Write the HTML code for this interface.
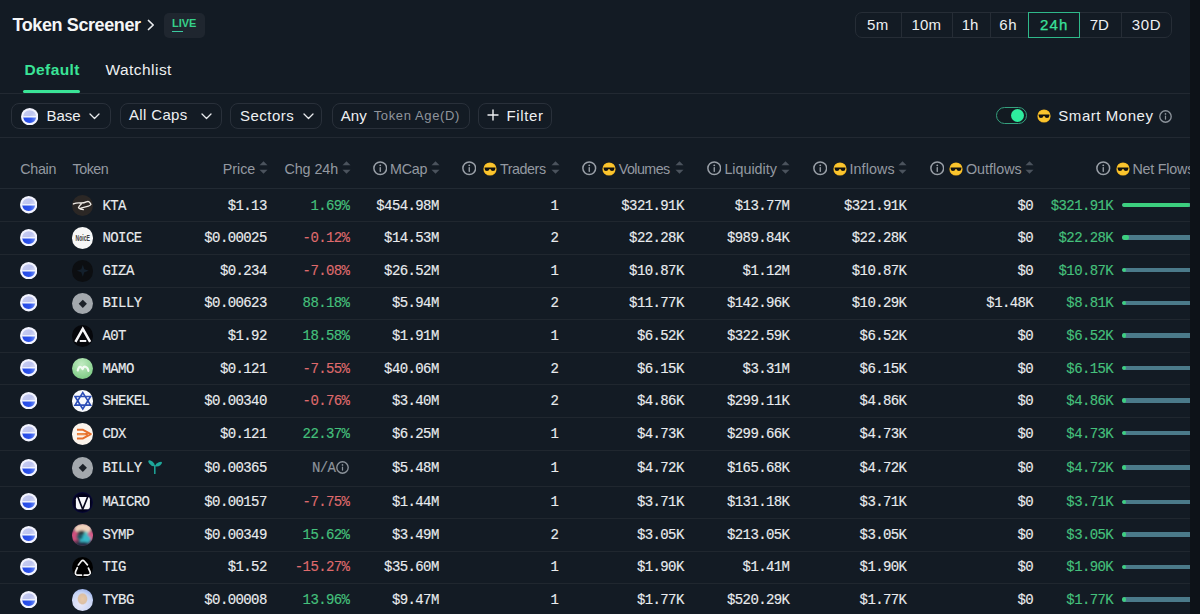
<!DOCTYPE html><html><head><meta charset="utf-8"><style>
*{margin:0;padding:0;box-sizing:border-box}
html,body{width:1200px;height:614px;overflow:hidden;background:#131b24;font-family:"Liberation Sans",sans-serif;color:#eceef0}
.abs{position:absolute;white-space:nowrap}
.title{left:12.5px;top:15px;font-size:18px;font-weight:bold;color:#f5f6f7;letter-spacing:-0.4px}
.live{left:163.5px;top:12.5px;width:41px;height:25px;background:#1f262f;border-radius:5px}
.live span{position:absolute;left:8.5px;top:4.7px;font-size:11px;font-weight:bold;color:#36d18a;letter-spacing:0}
.live i{position:absolute;left:8.5px;top:18.6px;width:11px;height:1.2px;background:#3cc9a0}
.seg{left:855px;top:12px;width:317px;height:26px;border:1px solid #262d36;border-radius:7px}
.segd{position:absolute;top:0;bottom:0;width:1px;background:#262d36}
.segt{font-size:15px;color:#eef0f2;top:16px;letter-spacing:0.4px}
.sel{left:1028px;top:12px;width:52px;height:26px;border:1.3px solid #2fb88a}
.tab{font-size:15.5px;font-weight:bold;top:61px}
.uline{left:23px;top:90px;width:57px;height:3px;background:#3ae497;border-radius:2px}
.hline{left:0;width:1190px;height:1px;background:#222932}
.pill{height:26px;border:1px solid #29303a;border-radius:8px;top:102.5px}
.pt{font-size:15px;color:#eef0f2;top:107px}
.chev{top:113.3px}
.base{position:absolute;width:17.4px;height:17.4px;line-height:0}
.base span{position:absolute;left:2.3px;top:2.3px;width:12.4px;height:12.4px;border-radius:50%;background:linear-gradient(to bottom,#e4e6fa 0,#b9c0ee 42%,#f4f6ff 42%,#f4f6ff 52%,#3b5ff0 52%,#2447e0 100%)}
.hdr{top:160.5px;font-size:14.3px;color:#9399a1}
.info{width:14.5px;height:14.5px;color:#9aa0a8;vertical-align:top}
.emo{width:14px;height:14px;vertical-align:top}
.sort{width:9px;height:13px;vertical-align:top}
.row{position:absolute;left:0;width:1190px;height:33px}
.rl{position:absolute;left:0;width:1190px;height:1px;background:#20272f}
.mono{font-family:"Liberation Mono",monospace;font-size:14px;letter-spacing:-0.6px;color:#e9ebee;-webkit-text-stroke:0.15px currentColor}
.g{color:#45c07c}
.r{color:#df6a6c}
.na{color:#8c939b}
.tk{position:absolute;width:21.6px;height:21.6px;border-radius:50%;overflow:hidden}.tk svg{display:block}
.noice{position:absolute;left:1px;top:5px;font-size:7px;color:#222;font-style:italic;font-family:"Liberation Serif",serif;letter-spacing:-0.3px}
.bar{position:absolute;left:1122px;width:68px;height:4.4px;border-radius:2.2px 0 0 2.2px;background:#4b7a8a;overflow:hidden}
.bar i{position:absolute;left:0;top:0;bottom:0;background:#3ccf7f;border-radius:2.25px}
.rside{left:1190px;top:0;width:10px;height:614px;background:#0d1218}
</style></head><body>
<div class="abs title">Token Screener</div>
<svg class="abs" style="left:146px;top:19px" width="10" height="12" viewBox="0 0 10 12"><path d="M2.5 1.5 L7.2 6 L2.5 10.5" fill="none" stroke="#e9ebee" stroke-width="1.7" stroke-linecap="round" stroke-linejoin="round"/></svg>
<div class="abs live"><span>LIVE</span><i></i></div>
<div class="abs seg">
<div class="segd" style="left:45.0px"></div>
<div class="segd" style="left:96.0px"></div>
<div class="segd" style="left:134.0px"></div>
<div class="segd" style="left:264.8px"></div>
</div>
<div class="abs segt" style="left:867px;color:#eef0f2;letter-spacing:0.5px">5m</div>
<div class="abs segt" style="left:911.5px;color:#eef0f2;letter-spacing:0.2px">10m</div>
<div class="abs segt" style="left:961.7px;color:#eef0f2;letter-spacing:0px">1h</div>
<div class="abs segt" style="left:999.2px;color:#eef0f2;letter-spacing:0.6px">6h</div>
<div class="abs segt" style="left:1040px;color:#3ae29b;-webkit-text-stroke:0.25px #3ae29b;letter-spacing:1.1px">24h</div>
<div class="abs segt" style="left:1089.7px;color:#eef0f2;letter-spacing:0px">7D</div>
<div class="abs segt" style="left:1131.7px;color:#eef0f2;letter-spacing:0.7px">30D</div>
<div class="abs sel"></div>
<div class="abs tab" style="left:24.5px;color:#3ae497;letter-spacing:0.4px">Default</div>
<div class="abs tab" style="left:105.5px;color:#eef0f2;font-weight:normal;letter-spacing:0.45px">Watchlist</div>
<div class="abs uline"></div>
<div class="abs hline" style="top:93px"></div>
<div class="abs pill" style="left:11px;width:100px"></div>
<div class="abs pill" style="left:120.2px;width:101.7px"></div>
<div class="abs pill" style="left:230px;width:92px"></div>
<div class="abs pill" style="left:331.5px;width:138.5px"></div>
<div class="abs pill" style="left:478px;width:74px"></div>
<svg width="0" height="0" style="position:absolute"><defs><linearGradient id="bgt" x1="0" y1="0" x2="1" y2="1"><stop offset="0" stop-color="#c9cef2"/><stop offset="0.45" stop-color="#bcc3ee"/><stop offset="1" stop-color="#f4f5ff"/></linearGradient><linearGradient id="bgb" x1="0" y1="0" x2="1" y2="0"><stop offset="0" stop-color="#2246e2"/><stop offset="0.6" stop-color="#2f55ec"/><stop offset="1" stop-color="#6c8cf4"/></linearGradient></defs></svg>
<span class="base" style="left:20.5px;top:107.5px"><svg width="17.4" height="17.4" viewBox="0 0 17 17" style="display:block"><circle cx="8.5" cy="8.5" r="8.5" fill="#f3f4ff"/><circle cx="8.5" cy="8.5" r="6.4" fill="url(#bgt)"/><path d="M2.12 8 H14.88 A6.4 6.4 0 0 1 2.12 8Z" fill="#fbfcff"/><path d="M2.2 9.3 H14.8 A6.4 6.4 0 0 1 2.2 9.3Z" fill="url(#bgb)"/></svg></span>
<div class="abs pt" style="left:46.5px">Base</div>
<svg class="abs chev" style="left:88.5px" width="11" height="7" viewBox="0 0 11 7"><path d="M1 1 L5.5 5.5 L10 1" fill="none" stroke="#e9ebee" stroke-width="1.3" stroke-linecap="round" stroke-linejoin="round"/></svg>
<div class="abs pt" style="left:129px;top:105.5px;letter-spacing:0.35px">All Caps</div>
<svg class="abs chev" style="left:200.5px" width="11" height="7" viewBox="0 0 11 7"><path d="M1 1 L5.5 5.5 L10 1" fill="none" stroke="#e9ebee" stroke-width="1.3" stroke-linecap="round" stroke-linejoin="round"/></svg>
<div class="abs pt" style="left:240px;letter-spacing:0.5px">Sectors</div>
<svg class="abs chev" style="left:302.5px" width="11" height="7" viewBox="0 0 11 7"><path d="M1 1 L5.5 5.5 L10 1" fill="none" stroke="#e9ebee" stroke-width="1.3" stroke-linecap="round" stroke-linejoin="round"/></svg>
<div class="abs pt" style="left:340.8px">Any</div>
<div class="abs pt" style="left:373.7px;top:107.5px;font-size:13px;color:#8f959d;letter-spacing:0.62px">Token Age(D)</div>
<svg class="abs" style="left:487px;top:109px" width="12" height="12" viewBox="0 0 12 12"><path d="M6 1 V11 M1 6 H11" stroke="#eef0f2" stroke-width="1.4" stroke-linecap="round"/></svg>
<div class="abs pt" style="left:506.5px;letter-spacing:0.65px">Filter</div>
<div class="abs" style="left:996px;top:107px;width:31px;height:17px;border:1.5px solid #35a07e;border-radius:999px;background:#121a21"></div>
<div class="abs" style="left:1011px;top:109px;width:13px;height:13px;border-radius:50%;background:#2eec9e"></div>
<svg class="abs emo" style="left:1037.3px;top:109.3px;width:14px;height:14px" viewBox="0 0 14 14"><circle cx="7" cy="7" r="6.6" fill="#f2b51f"/><circle cx="7" cy="7" r="6" fill="#fbc52e"/><path d="M1.6 5.4 H12.4 V6.4 Q12.2 9 10 9 Q8 9 7.4 7 H6.6 Q6 9 4 9 Q1.8 9 1.6 6.4Z" fill="#111"/></svg>
<div class="abs pt" style="left:1058.3px;letter-spacing:0.55px">Smart Money</div>
<svg class="abs info" style="left:1159px;top:109.5px;width:13px;height:13px;color:#8c939b" viewBox="0 0 14 14"><circle cx="7" cy="7" r="6.15" fill="none" stroke="currentColor" stroke-width="1.45"/><circle cx="7" cy="4.2" r="0.9" fill="currentColor"/><rect x="6.35" y="5.9" width="1.3" height="4.6" rx="0.5" fill="currentColor"/></svg>
<div class="abs hline" style="top:137px"></div>
<div class="abs hdr" style="left:20.3px;letter-spacing:-0.33px">Chain</div>
<div class="abs hdr" style="left:72.6px;letter-spacing:-0.5px">Token</div>
<div class="abs hdr" style="left:222.70px;letter-spacing:0px">Price</div>
<div class="abs" style="left:259.00px;top:161px;line-height:0"><svg class="sort" viewBox="0 0 9 13"><path d="M0.5 4.2 L4.5 0.3 L8.5 4.2Z" fill="#4b535d"/><path d="M0.5 8.8 L4.5 12.7 L8.5 8.8Z" fill="#4b535d"/></svg></div>
<div class="abs hdr" style="left:284.40px;letter-spacing:-0.05px">Chg 24h</div>
<div class="abs" style="left:342.00px;top:161px;line-height:0"><svg class="sort" viewBox="0 0 9 13"><path d="M0.5 4.2 L4.5 0.3 L8.5 4.2Z" fill="#4b535d"/><path d="M0.5 8.8 L4.5 12.7 L8.5 8.8Z" fill="#4b535d"/></svg></div>
<div class="abs hdr" style="left:390.10px;letter-spacing:-0.3px">MCap</div>
<div class="abs" style="left:372.50px;top:161.3px;line-height:0"><svg class="info" viewBox="0 0 14 14"><circle cx="7" cy="7" r="6.15" fill="none" stroke="currentColor" stroke-width="1.45"/><circle cx="7" cy="4.2" r="0.9" fill="currentColor"/><rect x="6.35" y="5.9" width="1.3" height="4.6" rx="0.5" fill="currentColor"/></svg></div>
<div class="abs" style="left:431.40px;top:161px;line-height:0"><svg class="sort" viewBox="0 0 9 13"><path d="M0.5 4.2 L4.5 0.3 L8.5 4.2Z" fill="#4b535d"/><path d="M0.5 8.8 L4.5 12.7 L8.5 8.8Z" fill="#4b535d"/></svg></div>
<div class="abs hdr" style="left:500.00px;letter-spacing:-0.45px">Traders</div>
<div class="abs" style="left:461.70px;top:161.3px;line-height:0"><svg class="info" viewBox="0 0 14 14"><circle cx="7" cy="7" r="6.15" fill="none" stroke="currentColor" stroke-width="1.45"/><circle cx="7" cy="4.2" r="0.9" fill="currentColor"/><rect x="6.35" y="5.9" width="1.3" height="4.6" rx="0.5" fill="currentColor"/></svg></div>
<div class="abs" style="left:482.60px;top:161.5px;line-height:0"><svg class="emo" viewBox="0 0 14 14"><circle cx="7" cy="7" r="6.6" fill="#f2b51f"/><circle cx="7" cy="7" r="6" fill="#fbc52e"/><path d="M1.6 5.4 H12.4 V6.4 Q12.2 9 10 9 Q8 9 7.4 7 H6.6 Q6 9 4 9 Q1.8 9 1.6 6.4Z" fill="#111"/></svg></div>
<div class="abs" style="left:550.70px;top:161px;line-height:0"><svg class="sort" viewBox="0 0 9 13"><path d="M0.5 4.2 L4.5 0.3 L8.5 4.2Z" fill="#4b535d"/><path d="M0.5 8.8 L4.5 12.7 L8.5 8.8Z" fill="#4b535d"/></svg></div>
<div class="abs hdr" style="left:618.70px;letter-spacing:-0.55px">Volumes</div>
<div class="abs" style="left:582.10px;top:161.3px;line-height:0"><svg class="info" viewBox="0 0 14 14"><circle cx="7" cy="7" r="6.15" fill="none" stroke="currentColor" stroke-width="1.45"/><circle cx="7" cy="4.2" r="0.9" fill="currentColor"/><rect x="6.35" y="5.9" width="1.3" height="4.6" rx="0.5" fill="currentColor"/></svg></div>
<div class="abs" style="left:602.10px;top:161.5px;line-height:0"><svg class="emo" viewBox="0 0 14 14"><circle cx="7" cy="7" r="6.6" fill="#f2b51f"/><circle cx="7" cy="7" r="6" fill="#fbc52e"/><path d="M1.6 5.4 H12.4 V6.4 Q12.2 9 10 9 Q8 9 7.4 7 H6.6 Q6 9 4 9 Q1.8 9 1.6 6.4Z" fill="#111"/></svg></div>
<div class="abs" style="left:675.40px;top:161px;line-height:0"><svg class="sort" viewBox="0 0 9 13"><path d="M0.5 4.2 L4.5 0.3 L8.5 4.2Z" fill="#4b535d"/><path d="M0.5 8.8 L4.5 12.7 L8.5 8.8Z" fill="#4b535d"/></svg></div>
<div class="abs hdr" style="left:724.40px;letter-spacing:0px">Liquidity</div>
<div class="abs" style="left:706.80px;top:161.3px;line-height:0"><svg class="info" viewBox="0 0 14 14"><circle cx="7" cy="7" r="6.15" fill="none" stroke="currentColor" stroke-width="1.45"/><circle cx="7" cy="4.2" r="0.9" fill="currentColor"/><rect x="6.35" y="5.9" width="1.3" height="4.6" rx="0.5" fill="currentColor"/></svg></div>
<div class="abs" style="left:781.45px;top:161px;line-height:0"><svg class="sort" viewBox="0 0 9 13"><path d="M0.5 4.2 L4.5 0.3 L8.5 4.2Z" fill="#4b535d"/><path d="M0.5 8.8 L4.5 12.7 L8.5 8.8Z" fill="#4b535d"/></svg></div>
<div class="abs hdr" style="left:849.40px;letter-spacing:0.12px">Inflows</div>
<div class="abs" style="left:812.80px;top:161.3px;line-height:0"><svg class="info" viewBox="0 0 14 14"><circle cx="7" cy="7" r="6.15" fill="none" stroke="currentColor" stroke-width="1.45"/><circle cx="7" cy="4.2" r="0.9" fill="currentColor"/><rect x="6.35" y="5.9" width="1.3" height="4.6" rx="0.5" fill="currentColor"/></svg></div>
<div class="abs" style="left:833.05px;top:161.5px;line-height:0"><svg class="emo" viewBox="0 0 14 14"><circle cx="7" cy="7" r="6.6" fill="#f2b51f"/><circle cx="7" cy="7" r="6" fill="#fbc52e"/><path d="M1.6 5.4 H12.4 V6.4 Q12.2 9 10 9 Q8 9 7.4 7 H6.6 Q6 9 4 9 Q1.8 9 1.6 6.4Z" fill="#111"/></svg></div>
<div class="abs" style="left:898.45px;top:161px;line-height:0"><svg class="sort" viewBox="0 0 9 13"><path d="M0.5 4.2 L4.5 0.3 L8.5 4.2Z" fill="#4b535d"/><path d="M0.5 8.8 L4.5 12.7 L8.5 8.8Z" fill="#4b535d"/></svg></div>
<div class="abs hdr" style="left:965.90px;letter-spacing:0.03px">Outflows</div>
<div class="abs" style="left:929.80px;top:161.3px;line-height:0"><svg class="info" viewBox="0 0 14 14"><circle cx="7" cy="7" r="6.15" fill="none" stroke="currentColor" stroke-width="1.45"/><circle cx="7" cy="4.2" r="0.9" fill="currentColor"/><rect x="6.35" y="5.9" width="1.3" height="4.6" rx="0.5" fill="currentColor"/></svg></div>
<div class="abs" style="left:949.30px;top:161.5px;line-height:0"><svg class="emo" viewBox="0 0 14 14"><circle cx="7" cy="7" r="6.6" fill="#f2b51f"/><circle cx="7" cy="7" r="6" fill="#fbc52e"/><path d="M1.6 5.4 H12.4 V6.4 Q12.2 9 10 9 Q8 9 7.4 7 H6.6 Q6 9 4 9 Q1.8 9 1.6 6.4Z" fill="#111"/></svg></div>
<div class="abs" style="left:1025.20px;top:161px;line-height:0"><svg class="sort" viewBox="0 0 9 13"><path d="M0.5 4.2 L4.5 0.3 L8.5 4.2Z" fill="#4b535d"/><path d="M0.5 8.8 L4.5 12.7 L8.5 8.8Z" fill="#4b535d"/></svg></div>
<div class="abs hdr" style="left:1132.40px;letter-spacing:-0.2px">Net Flows</div>
<div class="abs" style="left:1096.05px;top:161.3px;line-height:0"><svg class="info" viewBox="0 0 14 14"><circle cx="7" cy="7" r="6.15" fill="none" stroke="currentColor" stroke-width="1.45"/><circle cx="7" cy="4.2" r="0.9" fill="currentColor"/><rect x="6.35" y="5.9" width="1.3" height="4.6" rx="0.5" fill="currentColor"/></svg></div>
<div class="abs" style="left:1116.05px;top:161.5px;line-height:0"><svg class="emo" viewBox="0 0 14 14"><circle cx="7" cy="7" r="6.6" fill="#f2b51f"/><circle cx="7" cy="7" r="6" fill="#fbc52e"/><path d="M1.6 5.4 H12.4 V6.4 Q12.2 9 10 9 Q8 9 7.4 7 H6.6 Q6 9 4 9 Q1.8 9 1.6 6.4Z" fill="#111"/></svg></div>
<div class="abs hline" style="top:188.4px;background:#222a33"></div>
<span class="base" style="left:19.8px;top:196.39px"><svg width="17.4" height="17.4" viewBox="0 0 17 17" style="display:block"><circle cx="8.5" cy="8.5" r="8.5" fill="#f3f4ff"/><circle cx="8.5" cy="8.5" r="6.4" fill="url(#bgt)"/><path d="M2.12 8 H14.88 A6.4 6.4 0 0 1 2.12 8Z" fill="#fbfcff"/><path d="M2.2 9.3 H14.8 A6.4 6.4 0 0 1 2.2 9.3Z" fill="url(#bgb)"/></svg></span>
<span class="tk" style="left:71.9px;top:194.89px;background:#2b2725"><svg viewBox="0 0 20 20" width="21.6" height="21.6"><path d="M1.2 8.3 Q4 7.2 7.5 7.4 Q11 7.6 13.2 6.4 Q15 5.6 16.2 6.6 L17.6 8.6 Q17 9.8 15.2 10.3 Q12.5 11 10 11.6 L8.2 12.2 M8.6 8.4 Q6.5 10 6 11.8 Q7.5 13.4 10.5 13.6" fill="none" stroke="#efebe6" stroke-width="1.2" stroke-linecap="round" stroke-linejoin="round"/></svg></span>
<div class="abs mono" style="left:102.5px;top:197.69px">KTA</div>
<div class="abs mono" style="right:933.30px;top:197.69px">$1.13</div>
<div class="abs mono g" style="right:850.60px;top:197.69px">1.69%</div>
<div class="abs mono" style="right:761.30px;top:197.69px">$454.98M</div>
<div class="abs mono" style="right:641.60px;top:197.69px">1</div>
<div class="abs mono" style="right:516.30px;top:197.69px">$321.91K</div>
<div class="abs mono" style="right:410.60px;top:197.69px">$13.77M</div>
<div class="abs mono" style="right:293.60px;top:197.69px">$321.91K</div>
<div class="abs mono" style="right:166.85px;top:197.69px">$0</div>
<div class="abs mono g" style="right:86.85px;top:197.69px">$321.91K</div>
<div class="bar" style="top:202.89px"><i style="width:68.0px"></i></div>
<div class="rl" style="top:221.48px"></div>
<span class="base" style="left:19.8px;top:228.97px"><svg width="17.4" height="17.4" viewBox="0 0 17 17" style="display:block"><circle cx="8.5" cy="8.5" r="8.5" fill="#f3f4ff"/><circle cx="8.5" cy="8.5" r="6.4" fill="url(#bgt)"/><path d="M2.12 8 H14.88 A6.4 6.4 0 0 1 2.12 8Z" fill="#fbfcff"/><path d="M2.2 9.3 H14.8 A6.4 6.4 0 0 1 2.2 9.3Z" fill="url(#bgb)"/></svg></span>
<span class="tk" style="left:71.9px;top:227.47px;background:#f7f7f7"><svg viewBox="0 0 20 20" width="21.6" height="21.6"><text x="3.3" y="13" font-family="Liberation Sans" font-weight="bold" font-size="8.4" fill="#404040" textLength="13.4" lengthAdjust="spacingAndGlyphs">NoicE</text></svg></span>
<div class="abs mono" style="left:102.5px;top:230.27px">NOICE</div>
<div class="abs mono" style="right:933.30px;top:230.27px">$0.00025</div>
<div class="abs mono r" style="right:850.60px;top:230.27px">-0.12%</div>
<div class="abs mono" style="right:761.30px;top:230.27px">$14.53M</div>
<div class="abs mono" style="right:641.60px;top:230.27px">2</div>
<div class="abs mono" style="right:516.30px;top:230.27px">$22.28K</div>
<div class="abs mono" style="right:410.60px;top:230.27px">$989.84K</div>
<div class="abs mono" style="right:293.60px;top:230.27px">$22.28K</div>
<div class="abs mono" style="right:166.85px;top:230.27px">$0</div>
<div class="abs mono g" style="right:86.85px;top:230.27px">$22.28K</div>
<div class="bar" style="top:235.47px"><i style="width:6.5px"></i></div>
<div class="rl" style="top:254.06px"></div>
<span class="base" style="left:19.8px;top:261.55px"><svg width="17.4" height="17.4" viewBox="0 0 17 17" style="display:block"><circle cx="8.5" cy="8.5" r="8.5" fill="#f3f4ff"/><circle cx="8.5" cy="8.5" r="6.4" fill="url(#bgt)"/><path d="M2.12 8 H14.88 A6.4 6.4 0 0 1 2.12 8Z" fill="#fbfcff"/><path d="M2.2 9.3 H14.8 A6.4 6.4 0 0 1 2.2 9.3Z" fill="url(#bgb)"/></svg></span>
<span class="tk" style="left:71.9px;top:260.05px;background:#0c0e11"><svg viewBox="0 0 20 20" width="21.6" height="21.6"><path d="M10 4.5 L11.4 8.6 L15.5 10 L11.4 11.4 L10 15.5 L8.6 11.4 L4.5 10 L8.6 8.6Z" fill="#14202c"/></svg></span>
<div class="abs mono" style="left:102.5px;top:262.85px">GIZA</div>
<div class="abs mono" style="right:933.30px;top:262.85px">$0.234</div>
<div class="abs mono r" style="right:850.60px;top:262.85px">-7.08%</div>
<div class="abs mono" style="right:761.30px;top:262.85px">$26.52M</div>
<div class="abs mono" style="right:641.60px;top:262.85px">1</div>
<div class="abs mono" style="right:516.30px;top:262.85px">$10.87K</div>
<div class="abs mono" style="right:410.60px;top:262.85px">$1.12M</div>
<div class="abs mono" style="right:293.60px;top:262.85px">$10.87K</div>
<div class="abs mono" style="right:166.85px;top:262.85px">$0</div>
<div class="abs mono g" style="right:86.85px;top:262.85px">$10.87K</div>
<div class="bar" style="top:268.05px"><i style="width:4.2px"></i></div>
<div class="rl" style="top:286.64px"></div>
<span class="base" style="left:19.8px;top:294.13px"><svg width="17.4" height="17.4" viewBox="0 0 17 17" style="display:block"><circle cx="8.5" cy="8.5" r="8.5" fill="#f3f4ff"/><circle cx="8.5" cy="8.5" r="6.4" fill="url(#bgt)"/><path d="M2.12 8 H14.88 A6.4 6.4 0 0 1 2.12 8Z" fill="#fbfcff"/><path d="M2.2 9.3 H14.8 A6.4 6.4 0 0 1 2.2 9.3Z" fill="url(#bgb)"/></svg></span>
<span class="tk" style="left:71.9px;top:292.63px;background:#a3a8ad"><svg viewBox="0 0 20 20" width="21.6" height="21.6"><path d="M10 6.2 L13.8 10 L10 13.8 L6.2 10Z" fill="#1c2128"/></svg></span>
<div class="abs mono" style="left:102.5px;top:295.43px">BILLY</div>
<div class="abs mono" style="right:933.30px;top:295.43px">$0.00623</div>
<div class="abs mono g" style="right:850.60px;top:295.43px">88.18%</div>
<div class="abs mono" style="right:761.30px;top:295.43px">$5.94M</div>
<div class="abs mono" style="right:641.60px;top:295.43px">2</div>
<div class="abs mono" style="right:516.30px;top:295.43px">$11.77K</div>
<div class="abs mono" style="right:410.60px;top:295.43px">$142.96K</div>
<div class="abs mono" style="right:293.60px;top:295.43px">$10.29K</div>
<div class="abs mono" style="right:166.85px;top:295.43px">$1.48K</div>
<div class="abs mono g" style="right:86.85px;top:295.43px">$8.81K</div>
<div class="bar" style="top:300.63px"><i style="width:4.2px"></i></div>
<div class="rl" style="top:319.22px"></div>
<span class="base" style="left:19.8px;top:326.71px"><svg width="17.4" height="17.4" viewBox="0 0 17 17" style="display:block"><circle cx="8.5" cy="8.5" r="8.5" fill="#f3f4ff"/><circle cx="8.5" cy="8.5" r="6.4" fill="url(#bgt)"/><path d="M2.12 8 H14.88 A6.4 6.4 0 0 1 2.12 8Z" fill="#fbfcff"/><path d="M2.2 9.3 H14.8 A6.4 6.4 0 0 1 2.2 9.3Z" fill="url(#bgb)"/></svg></span>
<span class="tk" style="left:71.9px;top:325.21px;background:#06070b"><svg viewBox="0 0 20 20" width="21.6" height="21.6"><path d="M3.2 15.6 L10 3.6 L16.8 15.6" fill="none" stroke="#f6f6f8" stroke-width="2.3" stroke-linejoin="miter"/><rect x="7.2" y="13.9" width="6" height="1.8" fill="#f6f6f8"/></svg></span>
<div class="abs mono" style="left:102.5px;top:328.01px">A0T</div>
<div class="abs mono" style="right:933.30px;top:328.01px">$1.92</div>
<div class="abs mono g" style="right:850.60px;top:328.01px">18.58%</div>
<div class="abs mono" style="right:761.30px;top:328.01px">$1.91M</div>
<div class="abs mono" style="right:641.60px;top:328.01px">1</div>
<div class="abs mono" style="right:516.30px;top:328.01px">$6.52K</div>
<div class="abs mono" style="right:410.60px;top:328.01px">$322.59K</div>
<div class="abs mono" style="right:293.60px;top:328.01px">$6.52K</div>
<div class="abs mono" style="right:166.85px;top:328.01px">$0</div>
<div class="abs mono g" style="right:86.85px;top:328.01px">$6.52K</div>
<div class="bar" style="top:333.21px"><i style="width:4.2px"></i></div>
<div class="rl" style="top:351.80px"></div>
<span class="base" style="left:19.8px;top:359.29px"><svg width="17.4" height="17.4" viewBox="0 0 17 17" style="display:block"><circle cx="8.5" cy="8.5" r="8.5" fill="#f3f4ff"/><circle cx="8.5" cy="8.5" r="6.4" fill="url(#bgt)"/><path d="M2.12 8 H14.88 A6.4 6.4 0 0 1 2.12 8Z" fill="#fbfcff"/><path d="M2.2 9.3 H14.8 A6.4 6.4 0 0 1 2.2 9.3Z" fill="url(#bgb)"/></svg></span>
<span class="tk" style="left:71.9px;top:357.79px;background:radial-gradient(circle at 45% 30%,#c2ebc2,#86d08c 70%,#6fc27a)"><svg viewBox="0 0 20 20" width="21.6" height="21.6"><path d="M5.3 11.6 Q6.2 7.6 8 8.3 Q9.3 8.9 9.8 10.4 Q10.6 7.6 12.4 8.1 Q14.8 8.8 15.2 12" fill="none" stroke="#f2fbf2" stroke-width="2" stroke-linecap="round" stroke-linejoin="round"/></svg></span>
<div class="abs mono" style="left:102.5px;top:360.59px">MAMO</div>
<div class="abs mono" style="right:933.30px;top:360.59px">$0.121</div>
<div class="abs mono r" style="right:850.60px;top:360.59px">-7.55%</div>
<div class="abs mono" style="right:761.30px;top:360.59px">$40.06M</div>
<div class="abs mono" style="right:641.60px;top:360.59px">2</div>
<div class="abs mono" style="right:516.30px;top:360.59px">$6.15K</div>
<div class="abs mono" style="right:410.60px;top:360.59px">$3.31M</div>
<div class="abs mono" style="right:293.60px;top:360.59px">$6.15K</div>
<div class="abs mono" style="right:166.85px;top:360.59px">$0</div>
<div class="abs mono g" style="right:86.85px;top:360.59px">$6.15K</div>
<div class="bar" style="top:365.79px"><i style="width:4.2px"></i></div>
<div class="rl" style="top:384.38px"></div>
<span class="base" style="left:19.8px;top:391.87px"><svg width="17.4" height="17.4" viewBox="0 0 17 17" style="display:block"><circle cx="8.5" cy="8.5" r="8.5" fill="#f3f4ff"/><circle cx="8.5" cy="8.5" r="6.4" fill="url(#bgt)"/><path d="M2.12 8 H14.88 A6.4 6.4 0 0 1 2.12 8Z" fill="#fbfcff"/><path d="M2.2 9.3 H14.8 A6.4 6.4 0 0 1 2.2 9.3Z" fill="url(#bgb)"/></svg></span>
<span class="tk" style="left:71.9px;top:390.37px;background:#f8f9fc"><svg viewBox="0 0 20 20" width="21.6" height="21.6"><path d="M10 2.4 L17.2 14 L2.8 14Z M10 17.6 L2.8 6 L17.2 6Z" fill="none" stroke="#2c4db6" stroke-width="1.5" stroke-linejoin="miter"/></svg></span>
<div class="abs mono" style="left:102.5px;top:393.17px">SHEKEL</div>
<div class="abs mono" style="right:933.30px;top:393.17px">$0.00340</div>
<div class="abs mono r" style="right:850.60px;top:393.17px">-0.76%</div>
<div class="abs mono" style="right:761.30px;top:393.17px">$3.40M</div>
<div class="abs mono" style="right:641.60px;top:393.17px">2</div>
<div class="abs mono" style="right:516.30px;top:393.17px">$4.86K</div>
<div class="abs mono" style="right:410.60px;top:393.17px">$299.11K</div>
<div class="abs mono" style="right:293.60px;top:393.17px">$4.86K</div>
<div class="abs mono" style="right:166.85px;top:393.17px">$0</div>
<div class="abs mono g" style="right:86.85px;top:393.17px">$4.86K</div>
<div class="bar" style="top:398.37px"><i style="width:4.2px"></i></div>
<div class="rl" style="top:416.96px"></div>
<span class="base" style="left:19.8px;top:424.45px"><svg width="17.4" height="17.4" viewBox="0 0 17 17" style="display:block"><circle cx="8.5" cy="8.5" r="8.5" fill="#f3f4ff"/><circle cx="8.5" cy="8.5" r="6.4" fill="url(#bgt)"/><path d="M2.12 8 H14.88 A6.4 6.4 0 0 1 2.12 8Z" fill="#fbfcff"/><path d="M2.2 9.3 H14.8 A6.4 6.4 0 0 1 2.2 9.3Z" fill="url(#bgb)"/></svg></span>
<span class="tk" style="left:71.9px;top:422.95px;background:#fcf4ec"><svg viewBox="0 0 20 20" width="21.6" height="21.6"><path d="M4.6 6.2 H9.8 L17.4 10.3 L9.8 14.4 H4.6 M4.6 10.3 H14.6" fill="none" stroke="#e66f2c" stroke-width="1.9" stroke-linejoin="round"/><path d="M5 10.3 H12.5" stroke="#f6b070" stroke-width="0.8"/></svg></span>
<div class="abs mono" style="left:102.5px;top:425.75px">CDX</div>
<div class="abs mono" style="right:933.30px;top:425.75px">$0.121</div>
<div class="abs mono g" style="right:850.60px;top:425.75px">22.37%</div>
<div class="abs mono" style="right:761.30px;top:425.75px">$6.25M</div>
<div class="abs mono" style="right:641.60px;top:425.75px">1</div>
<div class="abs mono" style="right:516.30px;top:425.75px">$4.73K</div>
<div class="abs mono" style="right:410.60px;top:425.75px">$299.66K</div>
<div class="abs mono" style="right:293.60px;top:425.75px">$4.73K</div>
<div class="abs mono" style="right:166.85px;top:425.75px">$0</div>
<div class="abs mono g" style="right:86.85px;top:425.75px">$4.73K</div>
<div class="bar" style="top:430.95px"><i style="width:4.2px"></i></div>
<div class="rl" style="top:449.54px"></div>
<span class="base" style="left:19.8px;top:458.74px"><svg width="17.4" height="17.4" viewBox="0 0 17 17" style="display:block"><circle cx="8.5" cy="8.5" r="8.5" fill="#f3f4ff"/><circle cx="8.5" cy="8.5" r="6.4" fill="url(#bgt)"/><path d="M2.12 8 H14.88 A6.4 6.4 0 0 1 2.12 8Z" fill="#fbfcff"/><path d="M2.2 9.3 H14.8 A6.4 6.4 0 0 1 2.2 9.3Z" fill="url(#bgb)"/></svg></span>
<span class="tk" style="left:71.9px;top:457.24px;background:#a3a8ad"><svg viewBox="0 0 20 20" width="21.6" height="21.6"><path d="M10 6.2 L13.8 10 L10 13.8 L6.2 10Z" fill="#1c2128"/></svg></span>
<div class="abs mono" style="left:102.5px;top:460.04px">BILLY</div>
<div class="abs" style="left:147.1px;top:456.44px"><svg class="sprout" viewBox="0 0 16 18" width="16" height="18" style="display:block"><path d="M7.8 17.6 V9.5" stroke="#1ea79a" stroke-width="1.5" stroke-linecap="round"/><path d="M7.9 10.3 Q4.5 10.8 2.2 7.6 Q0.6 5.2 1.6 4.4 Q2.6 3.9 5.4 5.6 Q7.8 7.2 7.9 10.3Z" fill="#1ea79a"/><path d="M7.9 10.3 Q8.6 7.4 11.8 6.3 Q14.6 5.4 15 6.2 Q15.3 7.4 13.4 9.2 Q11.2 10.9 7.9 10.3Z" fill="#1ea79a"/></svg></div>
<div class="abs mono" style="right:933.30px;top:460.04px">$0.00365</div>
<div class="abs mono na" style="right:850.60px;top:460.04px">N/A<svg class="info" style="width:13px;height:13px;margin-left:1px;vertical-align:-2px;color:#8c939b" viewBox="0 0 14 14"><circle cx="7" cy="7" r="6.15" fill="none" stroke="currentColor" stroke-width="1.45"/><circle cx="7" cy="4.2" r="0.9" fill="currentColor"/><rect x="6.35" y="5.9" width="1.3" height="4.6" rx="0.5" fill="currentColor"/></svg></div>
<div class="abs mono" style="right:761.30px;top:460.04px">$5.48M</div>
<div class="abs mono" style="right:641.60px;top:460.04px">1</div>
<div class="abs mono" style="right:516.30px;top:460.04px">$4.72K</div>
<div class="abs mono" style="right:410.60px;top:460.04px">$165.68K</div>
<div class="abs mono" style="right:293.60px;top:460.04px">$4.72K</div>
<div class="abs mono" style="right:166.85px;top:460.04px">$0</div>
<div class="abs mono g" style="right:86.85px;top:460.04px">$4.72K</div>
<div class="bar" style="top:465.24px"><i style="width:4.2px"></i></div>
<div class="rl" style="top:485.54px"></div>
<span class="base" style="left:19.8px;top:493.03px"><svg width="17.4" height="17.4" viewBox="0 0 17 17" style="display:block"><circle cx="8.5" cy="8.5" r="8.5" fill="#f3f4ff"/><circle cx="8.5" cy="8.5" r="6.4" fill="url(#bgt)"/><path d="M2.12 8 H14.88 A6.4 6.4 0 0 1 2.12 8Z" fill="#fbfcff"/><path d="M2.2 9.3 H14.8 A6.4 6.4 0 0 1 2.2 9.3Z" fill="url(#bgb)"/></svg></span>
<span class="tk" style="left:71.9px;top:491.53px;background:radial-gradient(circle,#000018 55%,#15157a 100%)"><svg viewBox="0 0 20 20" width="21.6" height="21.6"><rect x="3.6" y="4.6" width="13" height="11.4" rx="2" fill="#f6f6fb"/><path d="M5.2 3.8 L9.9 16 L14.8 3.8" fill="none" stroke="#05051c" stroke-width="1.5"/></svg></span>
<div class="abs mono" style="left:102.5px;top:494.33px">MAICRO</div>
<div class="abs mono" style="right:933.30px;top:494.33px">$0.00157</div>
<div class="abs mono r" style="right:850.60px;top:494.33px">-7.75%</div>
<div class="abs mono" style="right:761.30px;top:494.33px">$1.44M</div>
<div class="abs mono" style="right:641.60px;top:494.33px">1</div>
<div class="abs mono" style="right:516.30px;top:494.33px">$3.71K</div>
<div class="abs mono" style="right:410.60px;top:494.33px">$131.18K</div>
<div class="abs mono" style="right:293.60px;top:494.33px">$3.71K</div>
<div class="abs mono" style="right:166.85px;top:494.33px">$0</div>
<div class="abs mono g" style="right:86.85px;top:494.33px">$3.71K</div>
<div class="bar" style="top:499.53px"><i style="width:4.2px"></i></div>
<div class="rl" style="top:518.12px"></div>
<span class="base" style="left:19.8px;top:525.61px"><svg width="17.4" height="17.4" viewBox="0 0 17 17" style="display:block"><circle cx="8.5" cy="8.5" r="8.5" fill="#f3f4ff"/><circle cx="8.5" cy="8.5" r="6.4" fill="url(#bgt)"/><path d="M2.12 8 H14.88 A6.4 6.4 0 0 1 2.12 8Z" fill="#fbfcff"/><path d="M2.2 9.3 H14.8 A6.4 6.4 0 0 1 2.2 9.3Z" fill="url(#bgb)"/></svg></span>
<span class="tk" style="left:71.9px;top:524.11px;background:#5a3550"><svg viewBox="0 0 20 20" width="21.6" height="21.6"><defs><filter id="bl" x="-20%" y="-20%" width="140%" height="140%"><feGaussianBlur stdDeviation="0.9"/></filter></defs><g filter="url(#bl)"><ellipse cx="10" cy="4.5" rx="8" ry="5" fill="#efd2bd"/><ellipse cx="2.5" cy="11" rx="3.5" ry="5" fill="#d0507e"/><ellipse cx="17.5" cy="11" rx="3.5" ry="4" fill="#d85a88"/><ellipse cx="9" cy="9" rx="4" ry="3" fill="#2a3a40"/><ellipse cx="12" cy="14" rx="5.5" ry="4" fill="#39b8c8"/><ellipse cx="7" cy="12" rx="3" ry="2.2" fill="#1e5a66"/><ellipse cx="10" cy="18.5" rx="6" ry="2" fill="#243048"/><ellipse cx="13" cy="8.5" rx="2" ry="1.6" fill="#58c8c8"/></g></svg></span>
<div class="abs mono" style="left:102.5px;top:526.91px">SYMP</div>
<div class="abs mono" style="right:933.30px;top:526.91px">$0.00349</div>
<div class="abs mono g" style="right:850.60px;top:526.91px">15.62%</div>
<div class="abs mono" style="right:761.30px;top:526.91px">$3.49M</div>
<div class="abs mono" style="right:641.60px;top:526.91px">2</div>
<div class="abs mono" style="right:516.30px;top:526.91px">$3.05K</div>
<div class="abs mono" style="right:410.60px;top:526.91px">$213.05K</div>
<div class="abs mono" style="right:293.60px;top:526.91px">$3.05K</div>
<div class="abs mono" style="right:166.85px;top:526.91px">$0</div>
<div class="abs mono g" style="right:86.85px;top:526.91px">$3.05K</div>
<div class="bar" style="top:532.11px"><i style="width:4.2px"></i></div>
<div class="rl" style="top:550.70px"></div>
<span class="base" style="left:19.8px;top:558.19px"><svg width="17.4" height="17.4" viewBox="0 0 17 17" style="display:block"><circle cx="8.5" cy="8.5" r="8.5" fill="#f3f4ff"/><circle cx="8.5" cy="8.5" r="6.4" fill="url(#bgt)"/><path d="M2.12 8 H14.88 A6.4 6.4 0 0 1 2.12 8Z" fill="#fbfcff"/><path d="M2.2 9.3 H14.8 A6.4 6.4 0 0 1 2.2 9.3Z" fill="url(#bgb)"/></svg></span>
<span class="tk" style="left:71.9px;top:556.69px;background:#000"><svg viewBox="0 0 20 20" width="21.6" height="21.6"><path d="M5.9 7.4 L8.6 3.9 Q10 2.3 11.4 3.9 L14.3 7.3 M5.0 9.9 L3.3 13.6 Q2.4 16.8 5.6 16.8 L8.8 16.8 M11.3 16.8 L14.5 16.8 Q17.7 16.8 16.8 13.8 L15.2 10.3" fill="none" stroke="#f2f2f2" stroke-width="1.55" stroke-linecap="round" stroke-linejoin="round"/></svg></span>
<div class="abs mono" style="left:102.5px;top:559.49px">TIG</div>
<div class="abs mono" style="right:933.30px;top:559.49px">$1.52</div>
<div class="abs mono r" style="right:850.60px;top:559.49px">-15.27%</div>
<div class="abs mono" style="right:761.30px;top:559.49px">$35.60M</div>
<div class="abs mono" style="right:641.60px;top:559.49px">1</div>
<div class="abs mono" style="right:516.30px;top:559.49px">$1.90K</div>
<div class="abs mono" style="right:410.60px;top:559.49px">$1.41M</div>
<div class="abs mono" style="right:293.60px;top:559.49px">$1.90K</div>
<div class="abs mono" style="right:166.85px;top:559.49px">$0</div>
<div class="abs mono g" style="right:86.85px;top:559.49px">$1.90K</div>
<div class="bar" style="top:564.69px"><i style="width:4.2px"></i></div>
<div class="rl" style="top:583.28px"></div>
<span class="base" style="left:19.8px;top:590.77px"><svg width="17.4" height="17.4" viewBox="0 0 17 17" style="display:block"><circle cx="8.5" cy="8.5" r="8.5" fill="#f3f4ff"/><circle cx="8.5" cy="8.5" r="6.4" fill="url(#bgt)"/><path d="M2.12 8 H14.88 A6.4 6.4 0 0 1 2.12 8Z" fill="#fbfcff"/><path d="M2.2 9.3 H14.8 A6.4 6.4 0 0 1 2.2 9.3Z" fill="url(#bgb)"/></svg></span>
<span class="tk" style="left:71.9px;top:589.27px;background:radial-gradient(ellipse at 50% 45%,#e8c8a8 0,#dcc0a4 28%,transparent 36%),radial-gradient(circle at 40% 70%,#e8e8f8 0,#c8d4f4 60%,#6c8ee0 100%)"></span>
<div class="abs mono" style="left:102.5px;top:592.07px">TYBG</div>
<div class="abs mono" style="right:933.30px;top:592.07px">$0.00008</div>
<div class="abs mono g" style="right:850.60px;top:592.07px">13.96%</div>
<div class="abs mono" style="right:761.30px;top:592.07px">$9.47M</div>
<div class="abs mono" style="right:641.60px;top:592.07px">1</div>
<div class="abs mono" style="right:516.30px;top:592.07px">$1.77K</div>
<div class="abs mono" style="right:410.60px;top:592.07px">$520.29K</div>
<div class="abs mono" style="right:293.60px;top:592.07px">$1.77K</div>
<div class="abs mono" style="right:166.85px;top:592.07px">$0</div>
<div class="abs mono g" style="right:86.85px;top:592.07px">$1.77K</div>
<div class="bar" style="top:597.27px"><i style="width:4.2px"></i></div>
<div class="abs rside"></div>
</body></html>
